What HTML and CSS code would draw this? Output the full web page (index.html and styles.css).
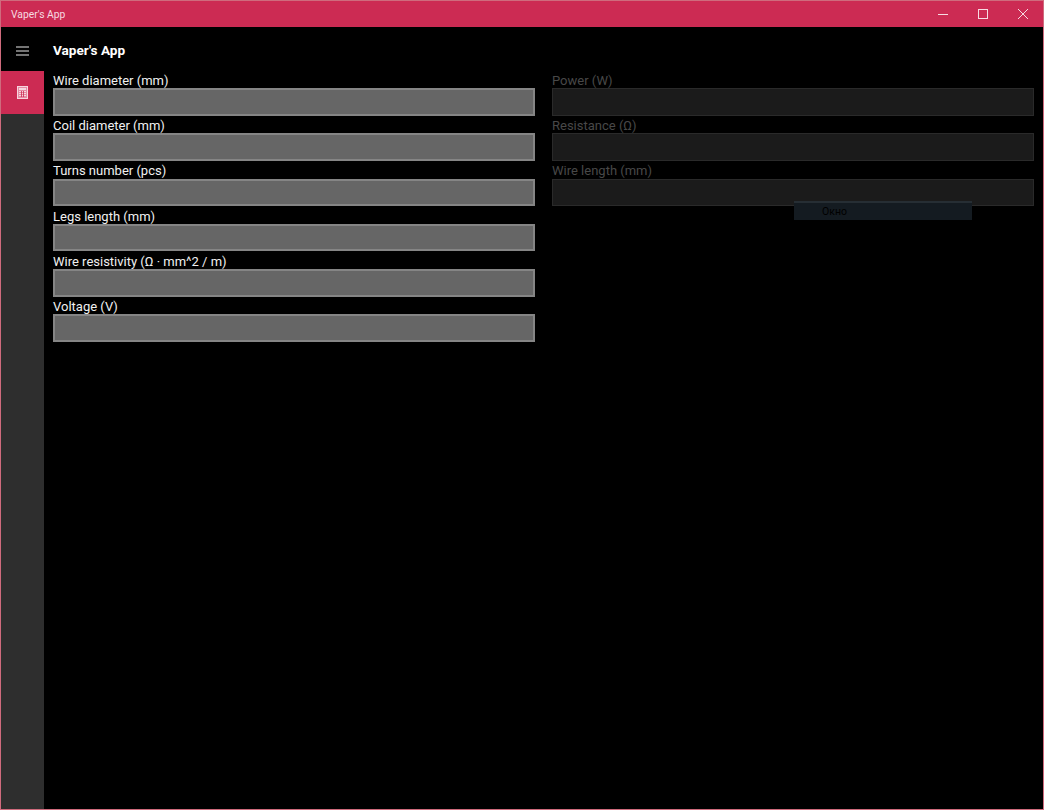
FILE: index.html
```html
<!DOCTYPE html>
<html lang="en">
<head>
<meta charset="utf-8">
<title>Vaper's App</title>
<link rel="stylesheet" href="styles.css">
</head>
<body>
<div class="window">
  <header class="titlebar">
    <span class="titlebar-name">Vaper's App</span>
    <div class="caption">
      <span class="caption-btn"><svg width="10" height="10" viewBox="0 0 10 10"><path d="M0 5.5H10" stroke="#f6dbe2" stroke-width="1"/></svg></span>
      <span class="caption-btn"><svg width="10" height="10" viewBox="0 0 10 10"><rect x="0.5" y="0.5" width="9" height="9" fill="none" stroke="#f6dbe2" stroke-width="1"/></svg></span>
      <span class="caption-btn"><svg width="10" height="10" viewBox="0 0 10 10"><path d="M0 0L10 10M10 0L0 10" stroke="#f6dbe2" stroke-width="1"/></svg></span>
    </div>
  </header>
  <div class="app">
    <nav class="rail">
      <div class="hamburger">
        <svg width="13" height="10" viewBox="0 0 13 10"><path d="M0 1H13M0 5H13M0 9H13" stroke="#e8e8e8" stroke-width="1"/></svg>
      </div>
      <div class="rail-item">
        <svg width="11" height="13" viewBox="0 0 11 13"><rect x="0.5" y="0.5" width="10" height="12" fill="#e58aa3" stroke="#f7d5de"/><rect x="2" y="2" width="7" height="2" fill="#f7d5de"/><path d="M2 5.5H9M2 7.5H9M2 9.5H9" stroke="#f7d5de" stroke-width="1"/><path d="M4.5 5V11M6.5 5V11" stroke="#cc2b53" stroke-width="0.8"/></svg>
      </div>
    </nav>
    <main class="main">
      <h1 class="page-title">Vaper's App</h1>
      <div class="columns">
        <section class="col">
          <div class="field"><label class="label">Wire diameter (mm)</label><div class="input"></div></div>
          <div class="field"><label class="label">Coil diameter (mm)</label><div class="input"></div></div>
          <div class="field"><label class="label">Turns number (pcs)</label><div class="input"></div></div>
          <div class="field"><label class="label">Legs length (mm)</label><div class="input"></div></div>
          <div class="field"><label class="label">Wire resistivity (Ω · mm^2 / m)</label><div class="input"></div></div>
          <div class="field"><label class="label">Voltage (V)</label><div class="input"></div></div>
        </section>
        <section class="col col-disabled">
          <div class="field"><label class="label">Power (W)</label><div class="input"></div></div>
          <div class="field"><label class="label">Resistance (Ω)</label><div class="input"></div></div>
          <div class="field"><label class="label">Wire length (mm)</label><div class="input"></div></div>
        </section>
      </div>
    </main>
  </div>
  <div class="tooltip">Окно</div>
</div>
</body>
</html>
```
FILE: styles.css
```css
* { box-sizing: border-box; }
html, body { margin: 0; height: 100%; background: #000; }
body { font-family: "Roboto", "Open Sans", sans-serif; overflow: hidden; }
.window {
  position: relative;
  width: 1044px;
  height: 810px;
  border: 1px solid #cf6b7d;
  background: #000;
  display: flex;
  flex-direction: column;
}
.titlebar {
  height: 26.4px;
  background: #cc2b53;
  display: flex;
  align-items: center;
  justify-content: space-between;
  padding-left: 10px;
  color: #f6dbe2;
  font-size: 10.3px;
  flex: none;
}
.caption { display: flex; height: 100%; }
.caption-btn { width: 40px; display: flex; align-items: center; justify-content: center; }
.app { flex: 1; display: flex; min-height: 0; }
.rail { width: 43px; background: #2e2e2e; flex: none; display: flex; flex-direction: column; }
.hamburger { height: 43.6px; background: #000; display: flex; align-items: center; justify-content: center; padding-top: 3px; }
.rail-item { height: 43px; background: #cc2b53; display: flex; align-items: center; justify-content: center; padding-top: 1px; }
.main { flex: 1; padding: 0 9px; min-width: 0; }
.page-title { margin: 0; height: 43.6px; line-height: 46px; font-size: 13.6px; font-weight: 700; color: #fff; }
.columns { display: grid; grid-template-columns: 1fr 1fr; column-gap: 17px; }
.col { display: flex; flex-direction: column; min-width: 0; }
.field { height: 45.2px; display: flex; flex-direction: column; }
.label { height: 17.3px; line-height: 20px; font-size: 13px; color: #f0f0f0; white-space: nowrap; }
.input { height: 27.5px; background: #666; border: 2px solid #858585; }
.col-disabled .label { color: #484848; }
.col-disabled .input { background: #1b1b1b; border: 1px solid #2a2a2a; }
.tooltip {
  position: absolute;
  left: 793px;
  top: 200px;
  width: 178px;
  height: 19px;
  padding-left: 28px;
  background: #141b21;
  border-top: 2px solid #262e34;
  color: #000;
  font-size: 10.5px;
  line-height: 18px;
}
```
